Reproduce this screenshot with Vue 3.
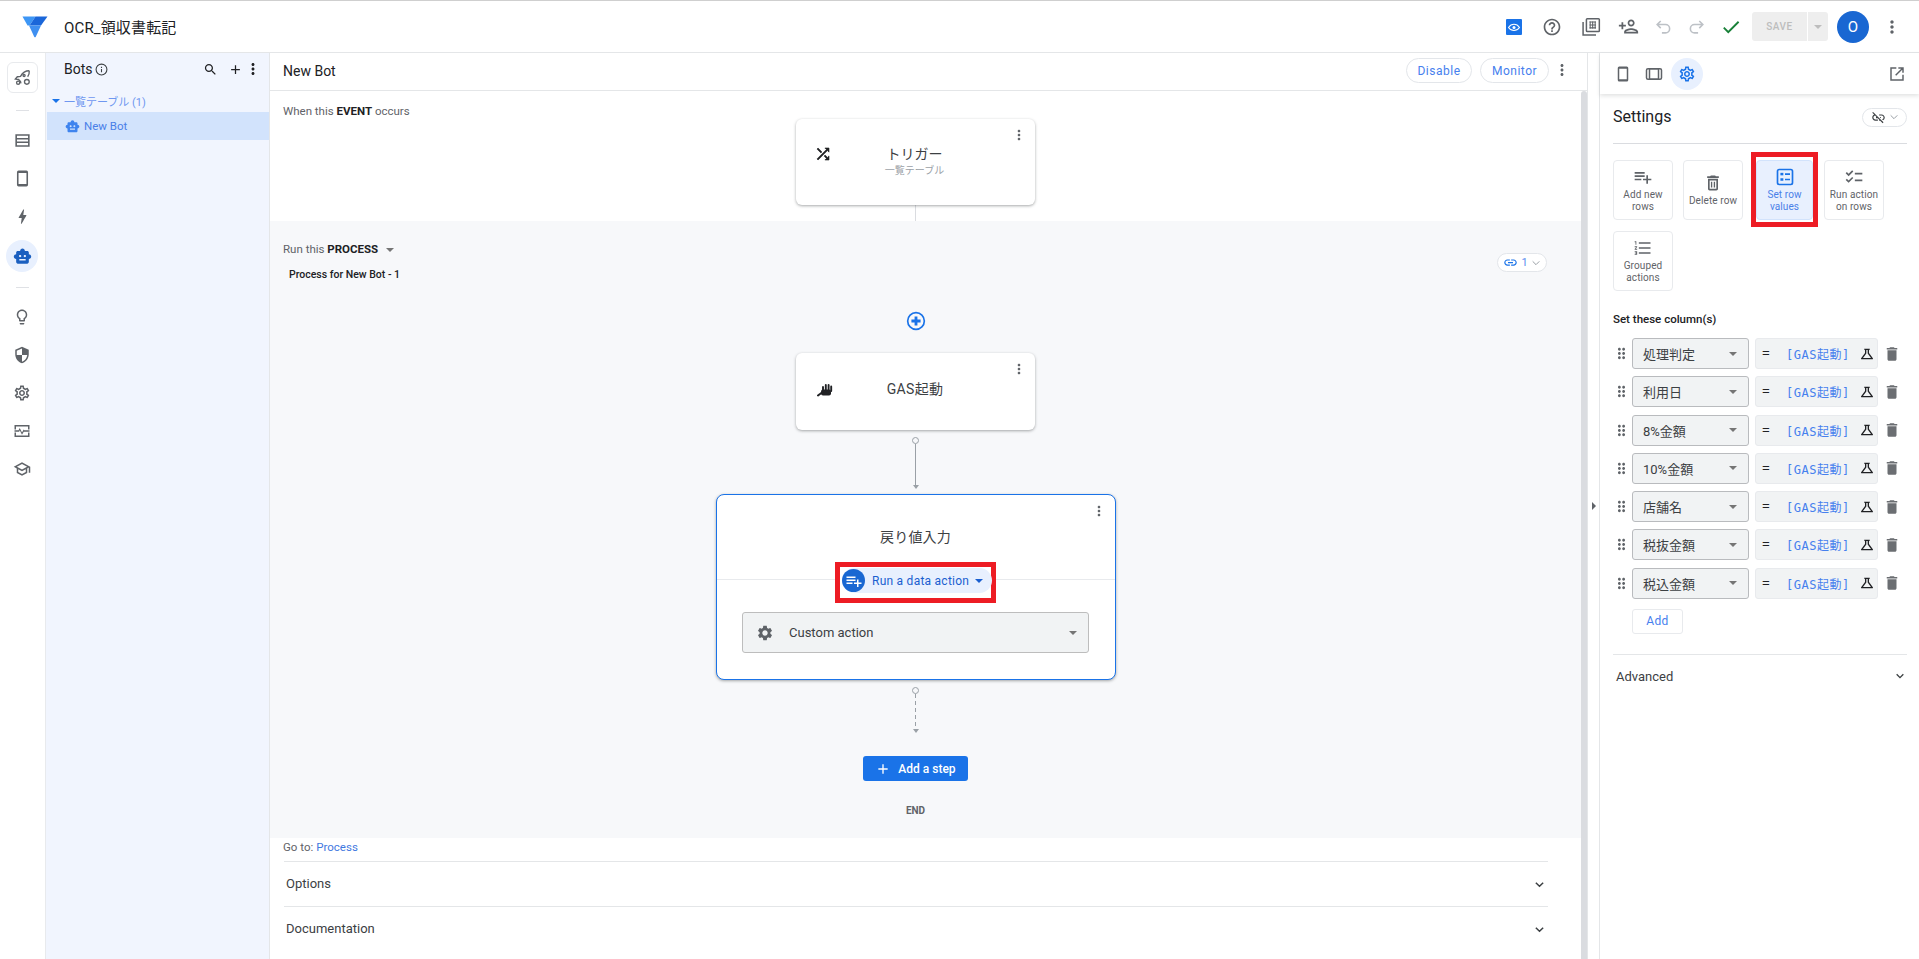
<script setup>
const p = {
  help: 'M11 18h2v-2h-2v2zm1-16C6.48 2 2 6.48 2 12s4.48 10 10 10 10-4.48 10-10S17.52 2 12 2zm0 18c-4.41 0-8-3.59-8-8s3.59-8 8-8 8 3.59 8 8-3.59 8-8 8zm0-14c-2.21 0-4 1.79-4 4h2c0-1.1.9-2 2-2s2 .9 2 2c0 2-3 1.75-3 5h2c0-2.25 3-2.5 3-5 0-2.21-1.79-4-4-4z',
  personAdd: 'M15 6c1.1 0 2 .9 2 2s-.9 2-2 2-2-.9-2-2 .9-2 2-2m0 10c2.7 0 5.8 1.29 6 2H9c.23-.72 3.31-2 6-2M15 4c-2.21 0-4 1.79-4 4s1.79 4 4 4 4-1.79 4-4-1.79-4-4-4zm0 10c-2.67 0-8 1.34-8 4v2h16v-2c0-2.66-5.33-4-8-4zM6 10V7H4v3H1v2h3v3h2v-3h3v-2H6z',
  check: 'M9 16.17L4.83 12l-1.42 1.41L9 19 21 7l-1.41-1.41z',
  more: 'M12 8c1.1 0 2-.9 2-2s-.9-2-2-2-2 .9-2 2 .9 2 2 2zm0 2c-1.1 0-2 .9-2 2s.9 2 2 2 2-.9 2-2-.9-2-2-2zm0 6c-1.1 0-2 .9-2 2s.9 2 2 2 2-.9 2-2-.9-2-2-2z',
  bolt: 'M11 21h-1l1-7H7.5c-.58 0-.57-.32-.38-.66.19-.34.05-.08.07-.12C8.48 10.94 10.42 7.54 13 3h1l-1 7h3.5c.49 0 .56.33.47.51l-.07.15C12.96 17.55 11 21 11 21z',
  robot: 'M20 9V7c0-1.1-.9-2-2-2h-3c0-1.66-1.34-3-3-3S9 3.34 9 5H6c-1.1 0-2 .9-2 2v2c-1.66 0-3 1.34-3 3s1.34 3 3 3v4c0 1.1.9 2 2 2h12c1.1 0 2-.9 2-2v-4c1.66 0 3-1.34 3-3s-1.34-3-3-3zM7.5 11.5C7.5 10.67 8.17 10 9 10s1.5.67 1.5 1.5S9.83 13 9 13s-1.5-.67-1.5-1.5zM16 17H8v-2h8v2zm-1-4c-.83 0-1.5-.67-1.5-1.5S14.17 10 15 10s1.5.67 1.5 1.5S15.83 13 15 13z',
  bulb: 'M9 21c0 .5.4 1 1 1h4c.6 0 1-.5 1-1v-1H9v1zm3-19C8.1 2 5 5.1 5 9c0 2.4 1.2 4.5 3 5.7V17c0 .5.4 1 1 1h6c.6 0 1-.5 1-1v-2.3c1.8-1.3 3-3.4 3-5.7 0-3.9-3.1-7-7-7zm2.9 11.1l-.9.6V16h-4v-2.3l-.9-.6C7.8 12.2 7 10.6 7 9c0-2.8 2.2-5 5-5s5 2.2 5 5c0 1.6-.8 3.2-2.1 4.1z',
  shield: 'M12 1L3 5v6c0 5.55 3.84 10.74 9 12 5.16-1.26 9-6.45 9-12V5l-9-4zm0 10.99h7c-.53 4.12-3.28 7.79-7 8.94V12H5V6.3l7-3.11v8.8z',
  gearO: 'M19.43 12.98c.04-.32.07-.64.07-.98 0-.34-.03-.66-.07-.98l2.11-1.65c.19-.15.24-.42.12-.64l-2-3.46c-.09-.16-.26-.25-.44-.25-.06 0-.12.01-.17.03l-2.49 1c-.52-.4-1.08-.73-1.69-.98l-.38-2.65C14.46 2.18 14.25 2 14 2h-4c-.25 0-.46.18-.49.42l-.38 2.65c-.61.25-1.17.59-1.69.98l-2.49-1c-.06-.02-.12-.03-.18-.03-.17 0-.34.09-.43.25l-2 3.46c-.13.22-.07.49.12.64l2.11 1.65c-.04.32-.07.65-.07.98 0 .33.03.66.07.98l-2.11 1.65c-.19.15-.24.42-.12.64l2 3.46c.09.16.26.25.44.25.06 0 .12-.01.17-.03l2.49-1c.52.4 1.08.73 1.69.98l.38 2.65c.03.24.24.42.49.42h4c.25 0 .46-.18.49-.42l.38-2.65c.61-.25 1.17-.59 1.69-.98l2.49 1c.06.02.12.03.18.03.17 0 .34-.09.43-.25l2-3.46c.12-.22.07-.49-.12-.64l-2.11-1.65zm-1.98-1.71c.04.31.05.52.05.73 0 .21-.02.43-.05.73l-.14 1.13.89.7 1.08.84-.7 1.21-1.27-.51-1.04-.42-.9.68c-.43.32-.84.56-1.25.73l-1.06.43-.16 1.13-.2 1.35h-1.4l-.19-1.35-.16-1.13-1.06-.43c-.43-.18-.83-.41-1.23-.71l-.91-.7-1.06.43-1.27.51-.7-1.21 1.08-.84.89-.7-.14-1.13c-.03-.31-.05-.54-.05-.74s.02-.43.05-.73l.14-1.13-.89-.7-1.08-.84.7-1.21 1.27.51 1.04.42.9-.68c.43-.32.84-.56 1.25-.73l1.06-.43.16-1.13.2-1.35h1.39l.19 1.35.16 1.13 1.06.43c.43.18.83.41 1.23.71l.91.7 1.06-.43 1.27-.51.7 1.21-1.07.85-.89.7.14 1.13zM12 8c-2.21 0-4 1.79-4 4s1.79 4 4 4 4-1.79 4-4-1.79-4-4-4zm0 6c-1.1 0-2-.9-2-2s.9-2 2-2 2 .9 2 2-.9 2-2 2z',
  gear: 'M19.14 12.94c.04-.3.06-.61.06-.94 0-.32-.02-.64-.07-.94l2.03-1.58c.18-.14.23-.41.12-.61l-1.92-3.32c-.12-.22-.37-.29-.59-.22l-2.39.96c-.5-.38-1.03-.7-1.62-.94l-.36-2.54c-.04-.24-.24-.41-.48-.41h-3.84c-.24 0-.43.17-.47.41l-.36 2.54c-.59.24-1.13.57-1.62.94l-2.39-.96c-.22-.08-.47 0-.59.22L2.74 8.87c-.12.21-.08.47.12.61l2.03 1.58c-.05.3-.09.63-.09.94s.02.64.07.94l-2.03 1.58c-.18.14-.23.41-.12.61l1.92 3.32c.12.22.37.29.59.22l2.39-.96c.5.38 1.03.7 1.62.94l.36 2.54c.05.24.24.41.48.41h3.84c.24 0 .44-.17.47-.41l.36-2.54c.59-.24 1.13-.56 1.62-.94l2.39.96c.22.08.47 0 .59-.22l1.92-3.32c.12-.22.07-.47-.12-.61l-2.01-1.58zM12 15.6c-1.98 0-3.6-1.62-3.6-3.6s1.62-3.6 3.6-3.6 3.6 1.62 3.6 3.6-1.62 3.6-3.6 3.6z',
  school: 'M12 3L1 9l4 2.18v6L12 21l7-3.82v-6l2-1.09V17h2V9L12 3zm6.82 6L12 12.72 5.18 9 12 5.28 18.82 9zM17 15.99l-5 2.73-5-2.73v-3.72L12 15l5-2.73v3.72z',
  search: 'M15.5 14h-.79l-.28-.27C15.41 12.59 16 11.11 16 9.5 16 5.91 13.09 3 9.5 3S3 5.91 3 9.5 5.91 16 9.5 16c1.61 0 3.09-.59 4.23-1.57l.27.28v.79l5 4.99L20.49 19l-4.99-5zm-6 0C7.01 14 5 11.99 5 9.5S7.01 5 9.5 5 14 7.01 14 9.5 11.99 14 9.5 14z',
  add: 'M19 13h-6v6h-2v-6H5v-2h6V5h2v6h6v2z',
  shuffle: 'M10.59 9.17L5.41 4 4 5.41l5.17 5.17 1.42-1.41zM14.5 4l2.04 2.04L4 18.59 5.41 20 17.96 7.46 20 9.5V4h-5.5zm.33 9.41l-1.41 1.41 3.13 3.13L14.5 20H20v-5.5l-2.04 2.04-3.13-3.13z',
  trash: 'M6 19c0 1.1.9 2 2 2h8c1.1 0 2-.9 2-2V7H6v12zM19 4h-3.5l-1-1h-5l-1 1H5v2h14V4z',
  trashO: 'M6 19c0 1.1.9 2 2 2h8c1.1 0 2-.9 2-2V7H6v12zM8 9h8v10H8V9zm1.5 1.5h1.6v7H9.5zm3.4 0h1.6v7h-1.6zM15.5 4l-1-1h-5l-1 1H5v2h14V4z',
  drag: 'M11 18c0 1.1-.9 2-2 2s-2-.9-2-2 .9-2 2-2 2 .9 2 2zm-2-8c-1.1 0-2 .9-2 2s.9 2 2 2 2-.9 2-2-.9-2-2-2zm0-6c-1.1 0-2 .9-2 2s.9 2 2 2 2-.9 2-2-.9-2-2-2zm6 4c1.1 0 2-.9 2-2s-.9-2-2-2-2 .9-2 2 .9 2 2 2zm0 2c-1.1 0-2 .9-2 2s.9 2 2 2 2-.9 2-2-.9-2-2-2zm0 6c-1.1 0-2 .9-2 2s.9 2 2 2 2-.9 2-2-.9-2-2-2z',
  flask: 'M13 11.33L18 18H6l5-6.67V6h2M15.96 4H8.04c-.42 0-.65.48-.39.81L9 6.5v4.17L3.2 18.4c-.49.66-.02 1.6.8 1.6h16c.82 0 1.29-.94.8-1.6L15 10.67V6.5l1.35-1.69c.26-.33.03-.81-.39-.81z',
  link: 'M3.9 12c0-1.71 1.39-3.1 3.1-3.1h4V7H7c-2.76 0-5 2.24-5 5s2.24 5 5 5h4v-1.9H7c-1.71 0-3.1-1.39-3.1-3.1zM8 13h8v-2H8v2zm9-6h-4v1.9h4c1.71 0 3.1 1.39 3.1 3.1s-1.39 3.1-3.1 3.1h-4V17h4c2.76 0 5-2.24 5-5s-2.24-5-5-5z',
  linkOff: 'M17 7h-4v1.9h4c1.71 0 3.1 1.39 3.1 3.1 0 1.43-.98 2.63-2.31 2.98l1.46 1.46C20.88 15.61 22 13.95 22 12c0-2.76-2.24-5-5-5zm-1 4h-2.19l2 2H16zM2 4.27l3.11 3.11C3.29 8.12 2 9.91 2 12c0 2.76 2.24 5 5 5h4v-1.9H7c-1.71 0-3.1-1.39-3.1-3.1 0-1.59 1.21-2.9 2.76-3.07L8.73 11H8v2h2.73L13 15.27V17h1.73l4.01 4L20 19.74 3.27 3 2 4.27z',
  listAdd: 'M14 10H2v2h12v-2zm0-4H2v2h12V6zm4 8v-4h-2v4h-4v2h4v4h2v-4h4v-2h-4zM2 16h8v-2H2v2z',
  numbered: 'M2 17h2v.5H3v1h1v.5H2v1h3v-4H2v1zm1-9h1V4H2v1h1v3zm-1 3h1.8L2 13.1v.9h3v-1H3.2L5 10.9V10H2v1zm5-6v2h14V5H7zm0 14h14v-2H7v2zm0-6h14v-2H7v2z',
  checklist: 'M22 7h-9v2h9V7zm0 8h-9v2h9v-2zM5.54 11 2 7.46l1.41-1.41 2.12 2.12 4.24-4.24 1.41 1.41L5.54 11zm0 8L2 15.46l1.41-1.41 2.12 2.12 4.24-4.24 1.41 1.41L5.54 19z',
  storage: 'M3 4h18v16H3V4zm2 2v2.7h14V6H5zm0 4.7v2.6h14v-2.6H5zm0 4.6V18h14v-2.7H5z',
  phone: 'M7 2h10a2 2 0 0 1 2 2v16a2 2 0 0 1-2 2H7a2 2 0 0 1-2-2V4a2 2 0 0 1 2-2zm0 3v14h10V5H7z',
  pulse: 'M2 4h20v6h-2V6H4v4H2V4zm0 10h2v4h16v-4h2v6H2v-6zm0-3h5.4l1.6-3 3 6 2.2-4 .9 1H22v2h-7.6l-.1-.1-2.3 4.1-3-6-.8 2H2v-2z'
}
const railTop = [['storage', false], ['phone', false], ['bolt', false], ['robot', true]]
const railBottom = ['bulb', 'shield', 'gearO', 'pulse', 'school']
const tiles = [
  { icon: 'listAdd', label: 'Add new rows' },
  { icon: 'trashO', label: 'Delete row' },
  { icon: 'rowvals', label: 'Set row values', on: true },
  { icon: 'checklist', label: 'Run action on rows' },
  { icon: 'numbered', label: 'Grouped actions' }
]
const rows = ['処理判定', '利用日', '8%金額', '10%金額', '店舗名', '税抜金額', '税込金額']
</script>

<template>
  <div class="app">
    <header class="top">
      <svg class="logo" viewBox="0 0 26 22" width="26" height="22">
        <path d="M.5.5h13L7.500 9.500H5.500z" fill="#3d96f5" />
        <path d="M13.500.5H25.500L19 9.500H7.500z" fill="#1a66d9" />
        <path d="M7 9.500h12l-5.200 11.200c-.4.8-1.100.8-1.600 0z" fill="#3f8ff0" />
      </svg>
      <div class="title">OCR_領収書転記</div>
      <div class="top-actions">
        <span class="ti" style="--w:38px">
          <svg viewBox="0 0 16 16" width="16" height="16"><rect width="16" height="16" fill="#1a73e8" rx="1" /><path d="M2.500 8.500C4 6.200 6 5.300 8 5.300s4 .9 5.500 3.200C12 10.500 10 11.500 8 11.500S4 10.500 2.500 8.500z" fill="none" stroke="#fff" stroke-width="1.100" /><circle cx="8" cy="8.400" r="1.500" fill="#fff" /></svg>
        </span>
        <span class="ti" style="--w:38px"><svg viewBox="0 0 24 24" width="20" height="20"><path :d="p.help" fill="#5f6368" /></svg></span>
        <span class="ti" style="--w:39px">
          <svg viewBox="0 0 24 24" width="20" height="20" fill="none" stroke="#5f6368" stroke-width="1.800"><path d="M2.500 6v15.500H18" /><rect x="6.500" y="2" width="15.500" height="15.500" rx="1" /><path d="M10 6h8M10 9.500h8M10 13h8M11 5v9M14 5v9M17 5v9" stroke-width="1.300" /></svg>
        </span>
        <span class="ti" style="--w:37px"><svg viewBox="0 0 24 24" width="21" height="21"><path :d="p.personAdd" fill="#5f6368" /></svg></span>
        <span class="ti" style="--w:33px"><svg viewBox="0 0 24 24" width="19" height="19" fill="none" stroke="#bdc1c6" stroke-width="2"><path d="M8.500 14 4 9.500 8.500 5M4 9.500h10.500a5 5 0 0 1 0 10.500H10" /></svg></span>
        <span class="ti" style="--w:33px"><svg viewBox="0 0 24 24" width="19" height="19" fill="none" stroke="#bdc1c6" stroke-width="2"><path d="M15.500 14 20 9.500 15.500 5M20 9.500H9.500a5 5 0 0 0 0 10.500H14" /></svg></span>
        <span class="ti" style="--w:36px"><svg viewBox="0 0 24 24" width="22" height="22"><path :d="p.check" fill="#188038" /></svg></span>
        <div class="save">
          <span class="save-l">SAVE</span>
          <span class="save-r"><i class="caret grey"></i></span>
        </div>
        <span class="avatar">O</span>
        <span class="ti dots"><svg viewBox="0 0 24 24" width="20" height="20"><path :d="p.more" fill="#5f6368" /></svg></span>
      </div>
    </header>

    <div class="main">
      <nav class="rail">
        <div class="rocket">
          <svg viewBox="0 0 24 24" width="19" height="19" fill="none" stroke="#5f6368" stroke-width="1.700"><path d="M20.500 3.500c-5 0-8.500 2.500-11 7l-4 .5-2.500 3 4 .5 2.500 2.500.5 2.500" /><path d="M20.500 3.500c.3 3-.4 5.700-2 7.500" /><circle cx="6.500" cy="18.500" r="2" /><circle cx="17.500" cy="17.500" r="3" /><circle cx="14" cy="9.500" r="1.300" /></svg>
        </div>
        <span class="rail-sep"></span>
        <div v-for="[name, on] in railTop" :key="name" class="ri" :class="{ on }">
          <svg viewBox="0 0 24 24" width="19" height="19"><path :d="p[name]" /></svg>
        </div>
        <span class="rail-sep s2"></span>
        <div v-for="name in railBottom" :key="name" class="ri">
          <svg viewBox="0 0 24 24" width="18" height="18"><path :d="p[name]" /></svg>
        </div>
      </nav>

      <aside class="bots">
        <div class="bots-head">
          <span class="bots-t">Bots</span>
          <svg class="info" viewBox="0 0 24 24" width="13" height="13" fill="none" stroke="#3c4043" stroke-width="2"><circle cx="12" cy="12" r="10" /><path d="M12 7v2M12 11v6" /></svg>
          <span class="grow"></span>
          <svg viewBox="0 0 24 24" width="15" height="15"><path :d="p.search" fill="#202124" /></svg>
          <svg class="m-add" viewBox="0 0 24 24" width="15" height="15"><path :d="p.add" fill="#202124" /></svg>
          <svg class="m-more" viewBox="0 0 24 24" width="18" height="18"><path :d="p.more" fill="#202124" /></svg>
        </div>
        <div class="tree-g"><i class="caret blue"></i><span>一覧テーブル (1)</span></div>
        <div class="tree-i">
          <svg viewBox="0 0 24 24" width="15" height="15"><path :d="p.robot" fill="#3f84ee" /></svg>
          <span>New Bot</span>
        </div>
      </aside>

      <section class="center">
        <div class="c-head">
          <span class="c-title">New Bot</span>
          <span class="grow"></span>
          <span class="pill-btn b1">Disable</span>
          <span class="pill-btn b2">Monitor</span>
          <svg viewBox="0 0 24 24" width="18" height="18"><path :d="p.more" fill="#5f6368" /></svg>
        </div>
        <div class="c-body">
          <div class="canvas">
            <div class="event">
              <div class="lab">When this <b>EVENT</b> occurs</div>
              <div class="card c-trig">
                <svg class="card-ic" viewBox="0 0 24 24" width="18" height="18"><path :d="p.shuffle" fill="#202124" stroke="#202124" stroke-width=".8" /></svg>
                <svg class="kebab" viewBox="0 0 24 24" width="16" height="16"><path :d="p.more" fill="#5f6368" /></svg>
                <div class="c-name">トリガー</div>
                <div class="c-sub">一覧テーブル</div>
              </div>
              <span class="stem"></span>
            </div>

            <div class="process">
              <div class="run-row">
                <div class="lab">Run this <b>PROCESS</b><i class="caret grey l"></i></div>
                <div class="pname">Process for New Bot - 1</div>
                <div class="chip-link">
                  <svg viewBox="0 0 24 24" width="15" height="15"><path :d="p.link" fill="#1a73e8" /></svg>
                  <span>1</span>
                  <svg class="chev" viewBox="0 0 12 12" width="10" height="10" fill="none" stroke="#9aa0a6" stroke-width="1.200"><path d="M2 4l4 4 4-4" /></svg>
                </div>
              </div>
              <div class="plus">
                <svg viewBox="0 0 24 24" width="20" height="20"><circle cx="12" cy="12" r="10" fill="none" stroke="#1a73e8" stroke-width="2" /><path d="M10.300 6.500h3.400v3.800h3.800v3.400h-3.800v3.800h-3.400v-3.800H6.500v-3.400h3.800z" fill="#1a73e8" /></svg>
              </div>
              <div class="card c-gas">
                <svg class="card-ic" viewBox="0 0 16 14" width="16" height="14" fill="#202124" stroke="#202124" stroke-linecap="round"><rect x="4" y="6.500" width="10" height="6" rx="2" stroke="none" /><path d="M1 12.500 5 9.500" stroke-width="2" /><path d="M6 7V4M8.800 7V2M11.600 7V2M14.200 8V3.500" stroke-width="1.900" /></svg>
                <svg class="kebab" viewBox="0 0 24 24" width="16" height="16"><path :d="p.more" fill="#5f6368" /></svg>
                <div class="c-name gas">GAS起動</div>
              </div>
              <div class="conn">
                <span class="dot"></span><span class="ln"></span><span class="arr"></span>
              </div>
              <div class="card c-data">
                <svg class="kebab" viewBox="0 0 24 24" width="16" height="16"><path :d="p.more" fill="#5f6368" /></svg>
                <div class="d-head">戻り値入力</div>
                <div class="d-hl">
                  <div class="d-pill">
                    <span class="d-ic"><svg viewBox="0 0 24 24" width="18" height="18"><path :d="p.listAdd" fill="#fff" /></svg></span>
                    <span>Run a data action</span>
                    <i class="caret blue2"></i>
                  </div>
                </div>
                <div class="d-sel">
                  <svg viewBox="0 0 24 24" width="18" height="18"><path :d="p.gear" fill="#5f6368" /></svg>
                  <span>Custom action</span>
                  <span class="grow"></span>
                  <i class="caret grey"></i>
                </div>
              </div>
              <div class="conn dash">
                <span class="dot"></span><span class="ln"></span><span class="arr"></span>
              </div>
              <div class="addstep">
                <svg viewBox="0 0 24 24" width="16" height="16"><path :d="p.add" fill="#fff" /></svg>
                <span>Add a step</span>
              </div>
              <div class="end">END</div>
            </div>

            <div class="foot">
              <div class="goto">Go to: <span>Process</span></div>
              <div class="acc">
                <span>Options</span>
                <svg viewBox="0 0 12 12" width="11" height="11" fill="none" stroke="#3c4043" stroke-width="1.600"><path d="M2 4l4 4 4-4" /></svg>
              </div>
              <div class="acc">
                <span>Documentation</span>
                <svg viewBox="0 0 12 12" width="11" height="11" fill="none" stroke="#3c4043" stroke-width="1.600"><path d="M2 4l4 4 4-4" /></svg>
              </div>
            </div>
          </div>
          <div class="sbar"></div>
        </div>
      </section>

      <div class="gutter"><i class="g-arrow"></i></div>

      <aside class="right">
        <div class="r-tabs">
          <span class="rt"><svg viewBox="0 0 24 24" width="18" height="18"><path :d="p.phone" fill="#5f6368" /></svg></span>
          <span class="rt">
            <svg viewBox="0 0 24 24" width="18" height="18" fill="none" stroke="#5f6368" stroke-width="2"><rect x="2" y="5" width="20" height="14" rx="2" /><rect x="6" y="5" width="12" height="14" /></svg>
          </span>
          <span class="rt on"><svg viewBox="0 0 24 24" width="18" height="18"><path :d="p.gearO" fill="#1a73e8" /></svg></span>
          <span class="grow"></span>
          <svg class="ext" viewBox="0 0 24 24" width="16" height="16" fill="none" stroke="#5f6368" stroke-width="2.200"><path d="M11 3H3v18h18v-8M14 3h7v7M21 3 10 14" /></svg>
        </div>
        <div class="r-body">
          <div class="r-title">
            <span>Settings</span>
            <span class="unlink">
              <svg viewBox="0 0 24 24" width="15" height="15"><path :d="p.linkOff" fill="#3c4043" /></svg>
              <svg viewBox="0 0 12 12" width="10" height="10" fill="none" stroke="#9aa0a6" stroke-width="1.200"><path d="M2 4l4 4 4-4" /></svg>
            </span>
          </div>
          <div class="tiles">
            <div v-for="t in tiles" :key="t.label" class="tile-wrap" :class="{ hl: t.on }">
              <div class="tile" :class="{ on: t.on }">
                <svg v-if="t.icon === 'rowvals'" viewBox="0 0 24 24" width="20" height="20" fill="none" stroke="#1a73e8" stroke-width="2"><rect x="3" y="3" width="18" height="18" rx="2" /><rect x="6.500" y="7" width="3.500" height="3" fill="#1a73e8" stroke="none" /><rect x="6.500" y="13.500" width="3.500" height="3" fill="#1a73e8" stroke="none" /><path d="M12 8.500h6M12 15h6" /></svg>
                <svg v-else viewBox="0 0 24 24" width="20" height="20"><path :d="p[t.icon]" fill="#5f6368" /></svg>
                <span>{{ t.label }}</span>
              </div>
            </div>
          </div>
          <div class="set-lab">Set these column(s)</div>
          <div class="rows">
            <div v-for="r in rows" :key="r" class="row">
              <svg class="r-drag" viewBox="0 0 24 24" width="17" height="17"><path :d="p.drag" fill="#5f6368" /></svg>
              <div class="r-sel"><span>{{ r }}</span><i class="caret grey"></i></div>
              <div class="r-val">
                <span class="eq">=</span>
                <span class="mono">[GAS起動]</span>
                <svg viewBox="0 0 24 24" width="16" height="16"><path :d="p.flask" fill="#202124" /></svg>
              </div>
              <svg class="r-del" viewBox="0 0 24 24" width="18" height="18"><path :d="p.trash" fill="#6b6e72" /></svg>
            </div>
          </div>
          <div class="add-btn">Add</div>
          <div class="adv">
            <span>Advanced</span>
            <svg viewBox="0 0 12 12" width="10" height="10" fill="none" stroke="#3c4043" stroke-width="1.600"><path d="M2 4l4 4 4-4" /></svg>
          </div>
        </div>
      </aside>
    </div>
  </div>
</template>

<style>
html, body { margin: 0; padding: 0; background: #fff; overflow: hidden; }
</style>

<style scoped>
.app {
  width: 1919px; height: 959px; overflow: hidden; display: flex; flex-direction: column;
  font-family: Roboto, "Noto Sans CJK JP", sans-serif; color: #3c4043; background: #fff;
  border-top: 1px solid #cfcfcf; box-sizing: border-box;
}
.grow { flex: 1; }
svg { display: block; flex: none; }
.caret { display: block; width: 0; height: 0; border-left: 4px solid transparent; border-right: 4px solid transparent; border-top: 4px solid #5f6368; flex: none; }
.caret.grey { border-top-color: #757575; }
.caret.blue { border-top-color: #1a73e8; }
.caret.blue2 { border-top-color: #1a5fd0; }
.caret.l { display: inline-block; margin-left: 8px; vertical-align: 1px; }

.top { height: 51px; flex: none; display: flex; align-items: center; border-bottom: 1px solid #e4e6e8; box-sizing: content-box; }
.logo { margin-left: 22px; margin-top: 1px; }
.title { margin-left: 16px; font-size: 15px; color: #202124; letter-spacing: .15px; }
.top-actions { margin-left: auto; display: flex; align-items: center; padding-right: 14px; }
.ti { width: var(--w); display: flex; justify-content: center; align-items: center; }
.save { display: flex; width: 76px; height: 29px; margin-left: 3px; border-radius: 3px; background: #eeeeee; font-size: 10px; font-weight: 500; letter-spacing: .5px; color: #bdbdbd; }
.save-l { width: 55px; display: flex; align-items: center; justify-content: center; border-right: 1px solid #fff; }
.save-r { flex: 1; display: flex; align-items: center; justify-content: center; }
.save-r .caret { border-top-color: #bdbdbd; }
.avatar { width: 32px; height: 32px; margin-left: 9px; border-radius: 50%; background: #1967d2; color: #fff; font-size: 15px; display: flex; align-items: center; justify-content: center; }
.dots { width: 26px; margin-left: 10px; }

.main { flex: 1; display: flex; min-height: 0; }
.rail { width: 45px; flex: none; border-right: 1px solid #e8eaed; display: flex; flex-direction: column; align-items: center; box-sizing: content-box; padding-top: 9px; }
.rocket { width: 31px; height: 31px; border: 1px solid #e8eaed; border-radius: 6px; box-sizing: border-box; display: flex; align-items: center; justify-content: center; margin-left: -1px; }
.rail-sep { width: 13px; height: 1px; background: #dfe1e5; margin: 17px 0 10px; flex: none; }
.rail-sep.s2 { margin: 15px 0 10px; }
.ri { width: 32px; height: 38px; display: flex; align-items: center; justify-content: center; flex: none; margin-left: -1px; }
.ri path { fill: #5f6368; }
.ri.on { height: 32px; margin: 5px 0 0 -1px; border-radius: 50%; background: #e8f0fe; }
.ri.on path { fill: #1a5fc0; }

.bots { width: 224px; flex: none; background: #f1f5fe; border-right: 1px solid #e4e6e8; box-sizing: border-box; }
.bots-head { height: 32px; display: flex; align-items: center; padding: 0 7px 0 18px; }
.bots-t { font-size: 14px; color: #202124; }
.info { margin-left: 2px; }
.m-add { margin-left: 10px; }
.m-more { margin-left: 1px; }
.tree-g { display: flex; align-items: center; gap: 4px; height: 22px; padding-left: 6px; margin-top: 5px; font-size: 11px; color: #6f97f0; }
.tree-i { height: 28px; margin-left: 1px; background: #d2e3fc; display: flex; align-items: center; gap: 4px; padding-left: 18px; font-size: 11.500px; color: #4a80e8; }

.center { flex: 1; min-width: 0; display: flex; flex-direction: column; }
.c-head { height: 37px; flex: none; display: flex; align-items: center; padding: 0 16px 0 13px; border-bottom: 1px solid #e4e6e8; box-sizing: content-box; }
.c-title { font-size: 14px; color: #202124; padding-bottom: 2px; }
.pill-btn { height: 25px; border: 1px solid #e3e6ea; border-radius: 13px; box-sizing: border-box; display: flex; align-items: center; justify-content: center; font-size: 12px; color: #4680ee; letter-spacing: .5px; margin-bottom: 2px; }
.b1 { width: 66px; margin-right: 8px; }
.b2 { width: 69px; margin-right: 4px; }
.c-head > svg { margin-bottom: 3px; }
.c-body { flex: 1; min-height: 0; display: flex; }
.canvas { flex: 1; min-width: 0; overflow: hidden; }
.sbar { width: 6px; background: #dadce0; border-radius: 3px 3px 0 0; flex: none; }

.event { height: 130px; padding-top: 12px; box-sizing: border-box; display: flex; flex-direction: column; align-items: center; padding-right: 20px; }
.lab { align-self: flex-start; padding-left: 13px; font-size: 11.500px; line-height: 16px; color: #5f6368; }
.lab b { color: #202124; font-weight: 700; }
.card { background: #fff; border-radius: 6px; position: relative; box-sizing: border-box; box-shadow: 0 1px 3px rgba(60,64,67,.45); flex: none; }
.c-trig { width: 239px; height: 86px; display: block; text-align: center; padding: 26px 2px 0 0; }
.c-name { font-size: 14px; color: #3c4043; line-height: 18px; }
.c-name.gas { letter-spacing: .3px; padding-right: 1px; }
.c-sub { font-size: 10px; line-height: 12px; color: #9aa0a6; margin-top: 2px; }
.card-ic { position: absolute; left: 18px; top: 26px; }
.kebab { position: absolute; right: 8px; top: 8px; }
.stem { width: 1px; height: 16px; background: #dadce0; flex: none; }

.process { height: 617px; background: #f7f8fa; display: flex; flex-direction: column; align-items: center; padding-right: 20px; box-sizing: border-box; position: relative; }
.run-row { align-self: stretch; height: 76px; box-sizing: border-box; padding-top: 20px; position: relative; flex: none; }
.pname { padding-left: 19px; margin-top: 11px; font-size: 10.500px; line-height: 14px; color: #202124; font-weight: 500; }
.chip-link { position: absolute; right: 14px; top: 32px; width: 50px; height: 19px; border: 1px solid #e3e6ea; background: #fff; border-radius: 10px; box-sizing: border-box; display: flex; align-items: center; justify-content: center; gap: 3px; font-size: 11px; color: #5b8def; }
.plus { height: 56px; flex: none; display: flex; align-items: flex-start; padding-top: 14px; box-sizing: border-box; }
.c-gas { width: 239px; height: 77px; padding-top: 27px; text-align: center; }
.c-gas .card-ic { top: 30px; left: 21px; }
.conn { height: 64px; display: flex; flex-direction: column; align-items: center; flex: none; width: 9px; }
.conn .dot { width: 5px; height: 5px; border: 1px solid #9aa0a6; border-radius: 50%; margin-top: 7px; flex: none; }
.conn .ln { width: 1px; flex: 1; background: #9aa0a6; }
.conn .arr { width: 0; height: 0; border-left: 3px solid transparent; border-right: 3px solid transparent; border-top: 4px solid #9aa0a6; margin-bottom: 5px; flex: none; }
.conn.dash .ln { background: repeating-linear-gradient(#9aa0a6 0 4px, transparent 4px 7px); }
.conn.dash { height: 58px; }
.c-data { width: 400px; height: 186px; border: 1px solid #1a73e8; border-radius: 8px; display: flex; flex-direction: column; align-items: center; }
.d-head { align-self: stretch; height: 85px; box-sizing: border-box; padding-top: 33px; line-height: 18px; font-size: 14px; letter-spacing: .2px; text-align: center; border-bottom: 1px solid #e8eaed; flex: none; }
.d-hl { margin-top: -18px; width: 161px; height: 41px; border: 5px solid #ed1c24; background: #fff; box-sizing: border-box; padding: 1px 0 0 2px; flex: none; position: relative; }
.d-pill { width: 150px; height: 25px; border-radius: 13px; background: #e8f0fe; display: flex; align-items: center; font-size: 12px; letter-spacing: .25px; color: #1a5fd0; }
.d-ic { width: 23px; height: 23px; border-radius: 50%; background: #1967d2; display: flex; align-items: center; justify-content: center; margin-right: 7px; }
.d-pill .caret { margin-left: 6px; }
.d-sel { margin-top: 9px; width: 347px; height: 41px; background: #f1f3f4; border: 1px solid #bdbdbd; border-radius: 3px; box-sizing: border-box; display: flex; align-items: center; padding: 0 11px 0 13px; font-size: 13px; color: #3c4043; gap: 15px; flex: none; }
.addstep { width: 105px; height: 25px; background: #1a73e8; border-radius: 3px; color: #fff; font-size: 12px; font-weight: 500; display: flex; align-items: center; justify-content: center; gap: 7px; flex: none; margin-top: 18px; }
.end { margin-top: 24px; font-size: 10px; font-weight: 700; color: #5f6368; line-height: 12px; }

.foot { padding: 0 33px 0 14px; }
.goto { height: 23px; display: flex; align-items: center; gap: 3px; font-size: 11.500px; color: #5f6368; padding-bottom: 5px; box-sizing: border-box; margin-left: -1px; }
.goto span { color: #3f78e0; }
.acc { height: 44px; border-top: 1px solid #e4e6e8; display: flex; align-items: center; justify-content: space-between; box-sizing: content-box; font-size: 13px; color: #3c4043; padding: 0 3px 0 2px; }
.acc span { padding-bottom: 1px; }

.gutter { width: 13px; flex: none; border-left: 1px solid #e4e6e8; border-right: 1px solid #e4e6e8; box-sizing: border-box; display: flex; align-items: center; justify-content: center; padding-bottom: 1px; background: #fff; }
.g-arrow { width: 0; height: 0; border-top: 4px solid transparent; border-bottom: 4px solid transparent; border-left: 4px solid #5f6368; }

.right { width: 319px; flex: none; display: flex; flex-direction: column; }
.r-tabs { height: 41px; flex: none; display: flex; align-items: center; padding: 0 14px 0 7px; box-shadow: 0 2px 4px rgba(60,64,67,.15); position: relative; }
.rt { width: 32px; height: 32px; display: flex; align-items: center; justify-content: center; margin-right: -1px; }
.rt.on { background: #e8f0fe; border-radius: 50%; margin-left: 2px; }
.r-body { padding: 0 12px 0 13px; flex: 1; }
.r-title { height: 50px; display: flex; align-items: center; justify-content: space-between; border-bottom: 1px solid #dadce0; font-size: 16px; color: #202124; padding-bottom: 5px; box-sizing: border-box; }
.unlink { width: 45px; height: 19px; border: 1px solid #e3e6ea; border-radius: 10px; box-sizing: border-box; display: flex; align-items: center; justify-content: center; gap: 3px; margin-top: 2px; }
.tiles { display: flex; flex-wrap: wrap; padding-top: 12px; gap: 0 10px; width: 290px; }
.tile-wrap { margin: 4px 0 7px; flex: none; }
.tile { width: 60px; height: 60px; border: 1px solid #e8eaed; border-radius: 4px; box-sizing: border-box; display: flex; flex-direction: column; align-items: center; justify-content: center; gap: 2px; font-size: 10px; letter-spacing: .1px; line-height: 12px; color: #5f6368; text-align: center; padding: 0 2px; }
.tile-wrap.hl { width: 67px; height: 75px; border: 5px solid #ed1c24; box-sizing: border-box; margin: -4px -4px 0 -2px; padding: 3px 0 0 0; }
.tile-wrap.hl .tile { width: 57px; height: 60px; margin: 0; }
.tile.on { background: #e8f0fe; border-color: #d2e3fc; color: #4a80e8; }
.set-lab { margin-top: 14px; font-size: 11.500px; line-height: 14px; font-weight: 500; color: #202124; }
.rows { margin-top: 12px; display: flex; flex-direction: column; gap: 7.300px; }
.row { display: flex; align-items: center; height: 31px; }
.r-drag { margin: 0 2px 0 0; }
.r-sel { width: 117px; height: 31px; background: #f1f3f4; border: 1px solid #b9bbbe; border-radius: 3px; box-sizing: border-box; display: flex; align-items: center; justify-content: space-between; padding: 0 11px 0 10px; font-size: 13px; color: #3c4043; }
.r-val { width: 123px; height: 31px; margin-left: 6px; background: #f1f3f4; border: 1px solid #e8eaed; border-radius: 3px; box-sizing: border-box; display: flex; align-items: center; padding: 0 2px 0 6px; font-size: 13px; }
.eq { width: 24px; color: #202124; font-family: "Liberation Mono", monospace; font-size: 13px; flex: none; }
.mono { flex: 1; color: #4680ee; font-family: "DejaVu Sans Mono", "Noto Sans CJK JP", monospace; font-size: 12px; letter-spacing: .5px; white-space: nowrap; }
.r-del { margin-left: 5px; }
.add-btn { margin: 10px 0 0 19px; width: 51px; height: 25px; border: 1px solid #e8eaed; border-radius: 3px; box-sizing: border-box; display: flex; align-items: center; justify-content: center; font-size: 12px; color: #4680ee; letter-spacing: .3px; }
.adv { margin-top: 20px; border-top: 1px solid #e4e6e8; height: 43px; display: flex; align-items: center; justify-content: space-between; padding: 0 2px 0 3px; font-size: 13px; color: #3c4043; }
</style>
